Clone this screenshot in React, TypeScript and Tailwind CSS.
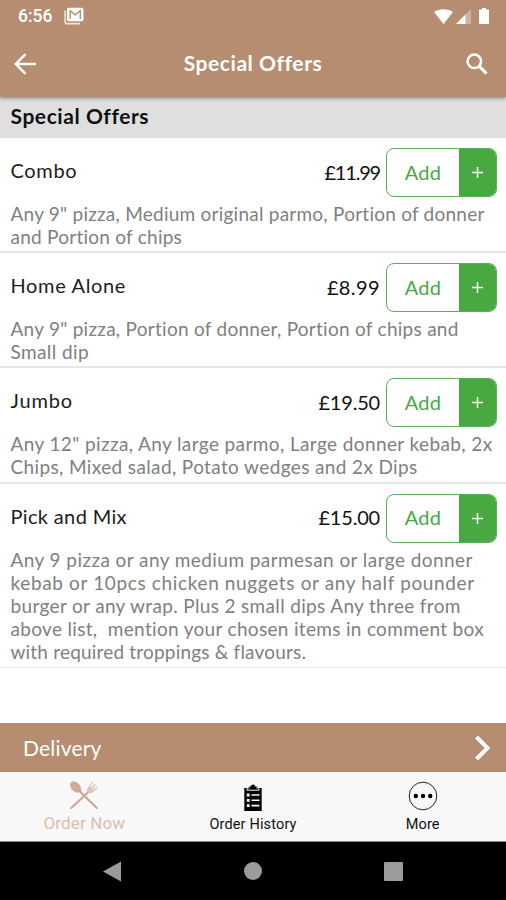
import clsx from 'clsx';

type Line = { text: string; tracking: string };

type Offer = {
  name: string;
  nameTracking: string;
  price: string;
  priceTracking: string;
  lines: Line[];
};

const offers: Offer[] = [
  {
    name: 'Combo',
    nameTracking: 'tracking-[0.65px]',
    price: '£11.99',
    priceTracking: 'tracking-[-1.2px]',
    lines: [
      { text: 'Any 9" pizza, Medium original parmo, Portion of donner', tracking: 'tracking-[0.24px]' },
      { text: 'and Portion of chips', tracking: 'tracking-[0.25px]' },
    ],
  },
  {
    name: 'Home Alone',
    nameTracking: 'tracking-[0.65px]',
    price: '£8.99',
    priceTracking: 'tracking-[0.4px]',
    lines: [
      { text: 'Any 9" pizza, Portion of donner, Portion of chips and', tracking: 'tracking-[0.27px]' },
      { text: 'Small dip', tracking: 'tracking-[0.4px]' },
    ],
  },
  {
    name: 'Jumbo',
    nameTracking: 'tracking-[0.8px]',
    price: '£19.50',
    priceTracking: 'tracking-[-0.2px]',
    lines: [
      { text: 'Any 12" pizza, Any large parmo, Large donner kebab, 2x', tracking: 'tracking-[0.39px]' },
      { text: 'Chips, Mixed salad, Potato wedges and 2x Dips', tracking: 'tracking-[0.37px]' },
    ],
  },
  {
    name: 'Pick and Mix',
    nameTracking: 'tracking-[0.35px]',
    price: '£15.00',
    priceTracking: 'tracking-[-0.2px]',
    lines: [
      { text: 'Any 9 pizza or any medium parmesan or large donner', tracking: 'tracking-[0.43px]' },
      { text: 'kebab or 10pcs chicken nuggets or any half pounder', tracking: 'tracking-[0.64px]' },
      { text: 'burger or any wrap. Plus 2 small dips Any three from', tracking: 'tracking-[0.34px]' },
      { text: 'above list,  mention your chosen items in comment box', tracking: 'tracking-[0.32px]' },
      { text: 'with required troppings & flavours.', tracking: 'tracking-[0.19px]' },
    ],
  },
];

function StatusBar() {
  return (
    <div className="flex h-8 items-center pl-[18px] pr-[17px] text-white">
      <span className="font-[Roboto,sans-serif] text-[17.5px] font-medium">6:56</span>
      <svg className="ml-3 h-[18px] w-5" viewBox="0 0 20 18" fill="none">
        <path d="M1.2 3.5v11.2c0 1.2.8 2 2 2H16" stroke="#f0e2d9" strokeWidth="1.7" />
        <rect x="3" y="0.8" width="16.5" height="13.4" rx="1.6" fill="#fff" />
        <path d="M6.2 12V3.8l5 4 5.1-4V12" stroke="#b68d70" strokeWidth="1.4" />
      </svg>
      <div className="ml-auto flex items-center">
        <svg className="h-[15px] w-[19px]" viewBox="0 0 19 15">
          <path d="M0 3C5-.8 14-.8 19 3L9.5 15z" fill="#fff" />
        </svg>
        <svg className="ml-[3px] h-[15px] w-[15px]" viewBox="0 0 15 15">
          <path d="M15 0v15H0z" fill="#fff" fillOpacity="0.35" />
          <path d="M9.5 5.5V15H0z" fill="#fff" />
        </svg>
        <svg className="ml-2 h-[16px] w-[10px]" viewBox="0 0 10 16">
          <path d="M3 0h4v1.6h2.2q.8 0 .8.8V15.200q0 .8-.8.8H.8Q0 16 0 15.200V2.400q0-.8.8-.8H3z" fill="#fff" />
        </svg>
      </div>
    </div>
  );
}

function Header() {
  return (
    <header className="relative z-10 h-[97px] bg-[#b68d70] text-white shadow-[0_1px_4px_rgba(0,0,0,0.45)]">
      <StatusBar />
      <div className="grid h-[63px] grid-cols-[60px_1fr_60px] items-center">
        <svg className="ml-[14px] h-[22px] w-[22px]" viewBox="0 0 22 22" fill="none" stroke="#fff" strokeWidth="2.4">
          <path d="M11.5 1.2 1.8 11l9.7 9.8M2 11h20" />
        </svg>
        <h1 className="pb-[2px] text-center text-[21px] font-bold tracking-[0.56px]">Special Offers</h1>
        <svg className="ml-[20px] h-[22px] w-[22px]" viewBox="0 0 23 23" fill="none" stroke="#fff">
          <circle cx="8.7" cy="8.7" r="7.1" strokeWidth="2.6" />
          <path d="m13.7 13.7 7.8 7.8" strokeWidth="3.2" />
        </svg>
      </div>
    </header>
  );
}

function AddButton() {
  return (
    <button className="flex h-[49px] w-[111px] overflow-hidden rounded-[8px] border border-[#58b158] text-[20px]">
      <span className="flex flex-1 items-center justify-center pb-[2px] tracking-[0.3px] text-[#47a943]">Add</span>
      <span className="flex w-[37px] items-center justify-center bg-[#47a93f] text-white">
        <svg className="h-[11px] w-[11px]" viewBox="0 0 11 11" stroke="#fff" strokeWidth="1.5">
          <path d="M5.5 0v11M0 5.5h11" />
        </svg>
      </span>
    </button>
  );
}

function OfferRow({ offer, last }: { offer: Offer; last: boolean }) {
  return (
    <li
      className={clsx(
        'border-[#e6e6e6] pl-[10.5px] pr-[9px] pt-[10px]',
        last ? 'border-b pb-[3.2px]' : 'border-b-2 pb-[2.2px]'
      )}
    >
      <div className="flex h-[49px] items-center">
        <h3 className={clsx('pb-[5px] text-[20px] text-[#1c1c1c]', offer.nameTracking)}>{offer.name}</h3>
        <span className={clsx('ml-auto mr-[6px] pb-[2px] text-[20px] text-[#111]', offer.priceTracking)}>
          {offer.price}
        </span>
        <AddButton />
      </div>
      <div className="mt-[5px] mb-px text-[19px] leading-[23px] text-[#808080]">
        {offer.lines.map((line) => (
          <p key={line.text} className="whitespace-pre">
            <span className={line.tracking}>{line.text}</span>
          </p>
        ))}
      </div>
    </li>
  );
}

function TabBar() {
  return (
    <nav className="grid h-[70px] grid-cols-3 border-b border-[#8a8a8a] bg-[#f8f8f8] font-[Roboto,sans-serif] text-[14.5px] text-[#111]">
      <div className="flex flex-col items-center pt-[8px] text-[#d9bfae]">
        <svg className="h-[30px] w-[30px]" viewBox="0 0 30 30" fill="none">
          <ellipse cx="6.6" cy="7" rx="4.4" ry="6.6" transform="rotate(-43 6.6 7)" fill="#cfac98" />
          <path d="m10 10.500 17.800 17.500" stroke="#c9a48e" strokeWidth="2" strokeLinecap="round" />
          <path d="M20 11.500 2.200 28" stroke="#c9a48e" strokeWidth="2" strokeLinecap="round" />
          <path
            d="M18 9c-.6 2.800 1.800 4.800 4.800 4l6-5.500-1.100-1-4 3.200-.8-.8 3.800-4-1-1-4 3.800-.8-.8L24 2.800l-1-1z"
            fill="#dcc5b7"
          />
        </svg>
        <span className="mt-[3px] text-[17px] leading-[20px] tracking-[0.15px]">Order Now</span>
      </div>
      <div className="flex flex-col items-center pt-[12px]">
        <svg className="h-[28px] w-[20px]" viewBox="0 0 20 28">
          <path d="M1.300 4h3.500L6.300 2.500h1.500C8.300-.2 11.700-.2 12.200 2.500h1.500L15.200 4h3.500v23H1.300z" fill="#000" />
          <path d="M3.800 6c0-1.600 1.200-2.200 3-2.200M16.200 6c0-1.600-1.200-2.200-3-2.200M3.800 6.200h12.400" fill="none" stroke="#f8f8f8" />
          <path d="M3.800 11h2.800M3.800 16.300h2.800M3.800 21.600h2.800" stroke="#f8f8f8" strokeWidth="2.800" />
          <path d="M8.500 11h8M8.500 16.300h8M8.500 21.600h8" stroke="#f8f8f8" strokeWidth="1.600" />
        </svg>
        <span className="mt-[4px] leading-[17px] tracking-[0.15px]">Order History</span>
      </div>
      <div className="flex flex-col items-center pt-[9px]">
        <svg className="ml-[2px] h-[30px] w-[30px]" viewBox="0 0 30 30">
          <circle cx="15" cy="15" r="13.800" fill="none" stroke="#222" strokeWidth="1" />
          <circle cx="7.800" cy="15" r="2.200" />
          <circle cx="15" cy="15" r="2.200" />
          <circle cx="22.200" cy="15" r="2.200" />
        </svg>
        <span className="ml-[2px] mt-[5px] leading-[17px] tracking-[0.15px]">More</span>
      </div>
    </nav>
  );
}

function SystemNav() {
  return (
    <div className="flex h-[58px] items-center bg-black pl-[103px]">
      <svg className="h-[21px] w-[19px]" viewBox="0 0 19 21">
        <path d="M0 10.500 18 .500v20z" fill="#9b9b9b" />
      </svg>
      <div className="ml-[122px] h-[18px] w-[18px] rounded-full bg-[#9b9b9b]" />
      <div className="ml-[122px] h-[19px] w-[19px] rounded-[1px] bg-[#9b9b9b]" />
    </div>
  );
}

export default function App() {
  return (
    <div className="flex h-[900px] w-[506px] flex-col overflow-hidden bg-white font-[Lato,sans-serif]">
      <Header />
      <h2 className="flex h-[41px] items-center bg-[#dfdfdf] pb-[3px] pl-[10.5px] text-[21px] font-bold tracking-[0.56px] text-[#111]">
        Special Offers
      </h2>
      <ul>
        {offers.map((offer, i) => (
          <OfferRow key={offer.name} offer={offer} last={i === offers.length - 1} />
        ))}
      </ul>
      <div className="mt-auto flex h-[49px] items-center justify-between bg-[#b68d70] pl-[23px] pr-[15px] text-white">
        <span className="text-[21px] tracking-[0.2px]">Delivery</span>
        <svg className="h-[26px] w-[17px]" viewBox="0 0 17 26" fill="none" stroke="#fff" strokeWidth="4">
          <path d="m2.500 2 11 11-11 11" />
        </svg>
      </div>
      <TabBar />
      <SystemNav />
    </div>
  );
}
